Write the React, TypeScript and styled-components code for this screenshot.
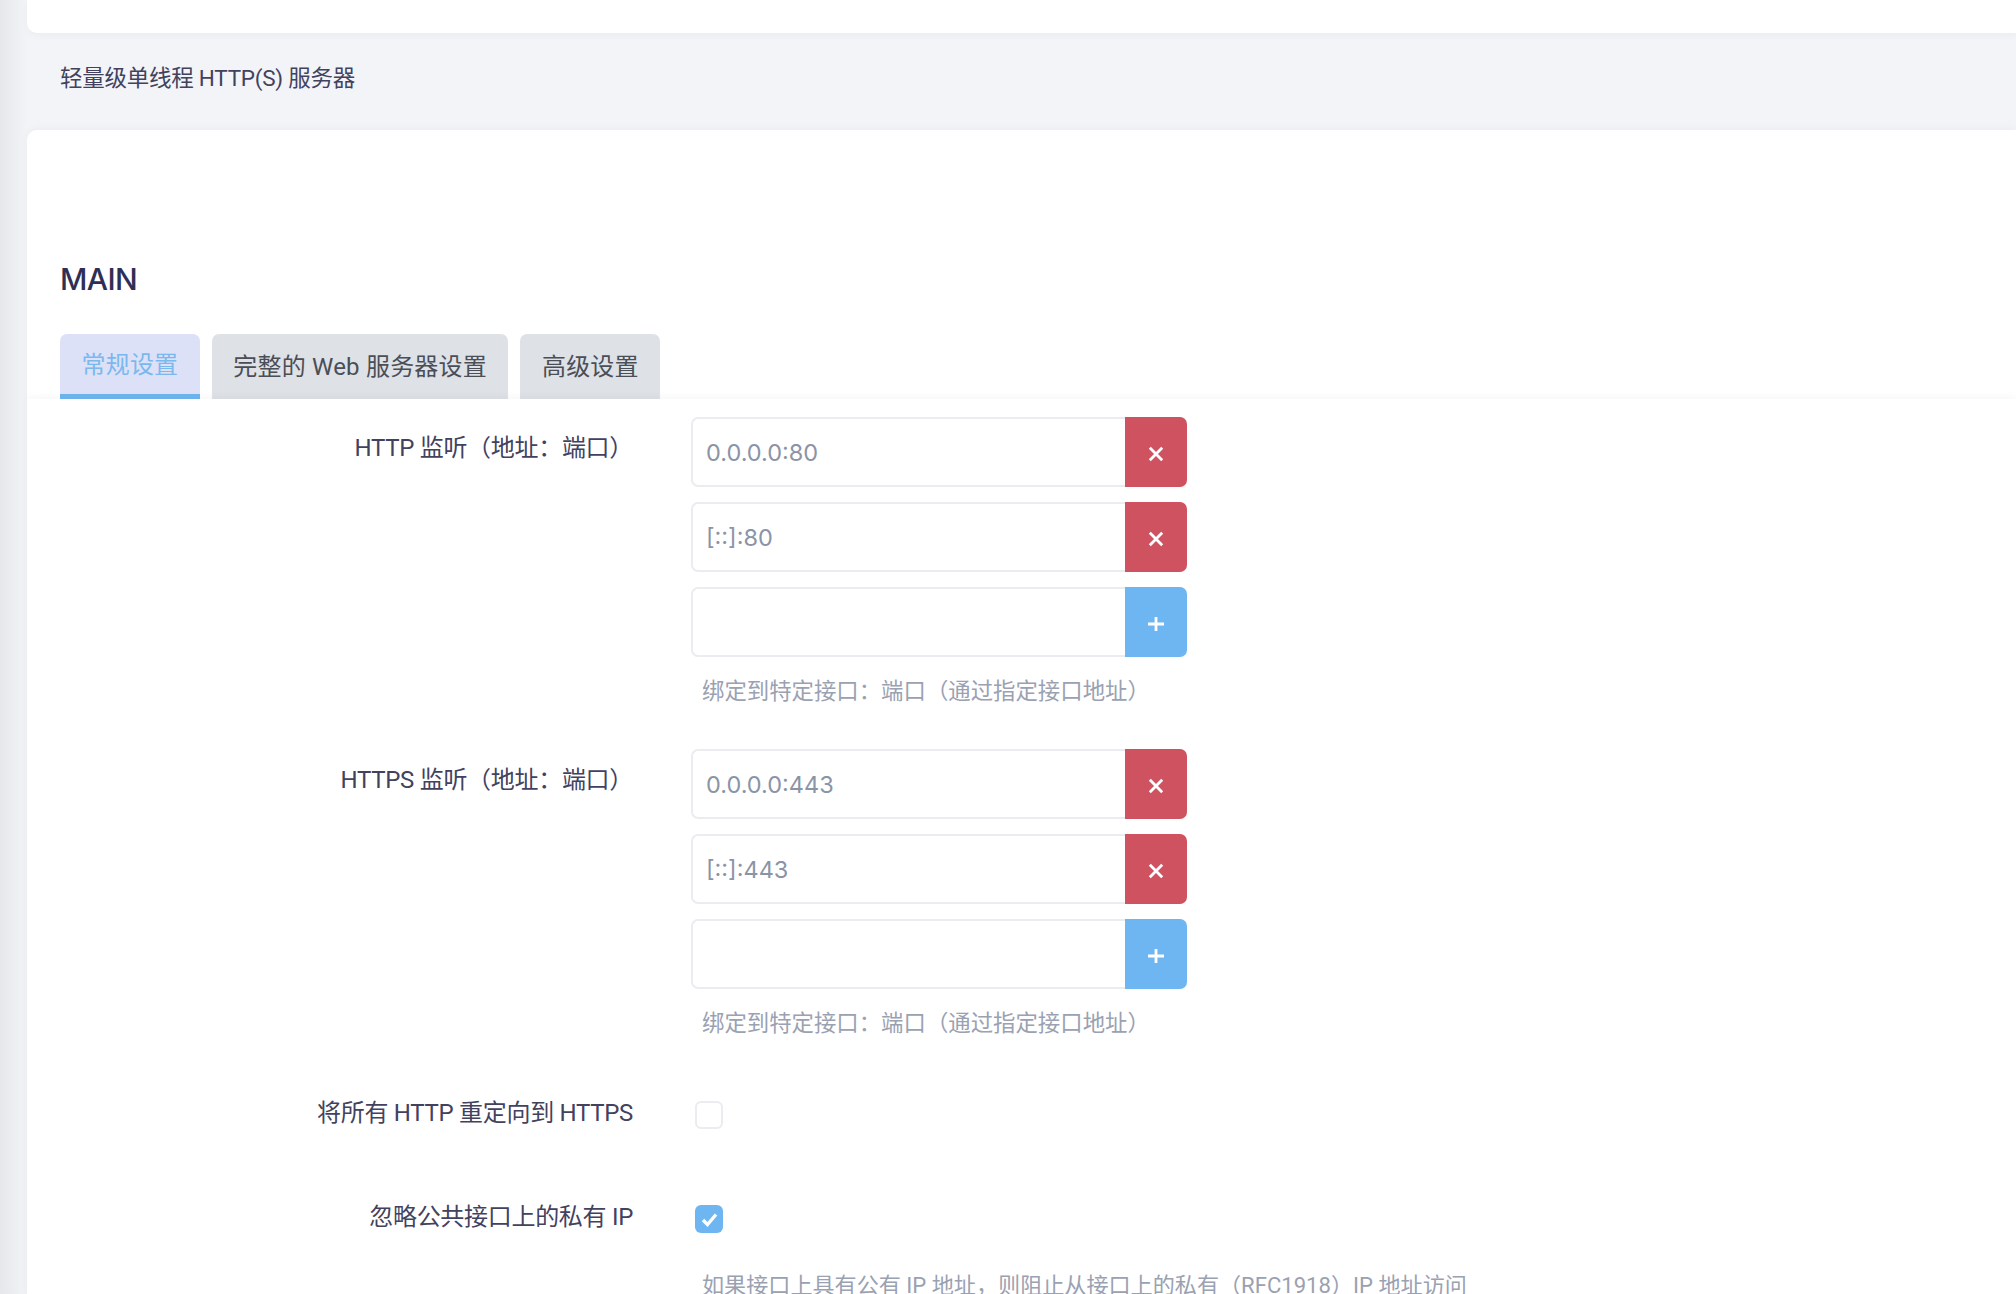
import styled, { createGlobalStyle } from "styled-components";

const GlobalStyle = createGlobalStyle`
  html, body {
    margin: 0;
    padding: 0;
    background: #f3f4f7;
  }
  * {
    box-sizing: border-box;
  }
`;

const fontStack = `Roboto, "Noto Sans CJK SC", sans-serif`;
const valueFont = `Inter, "Noto Sans CJK SC", sans-serif`;

const RemoveIcon = () => (
  <svg width="16" height="16" viewBox="0 0 16 16">
    <path d="M1.8 1.8 L14.2 14.2 M14.2 1.8 L1.8 14.2" stroke="#fff" strokeWidth="2.8" fill="none" />
  </svg>
);

const AddIcon = () => (
  <svg width="16" height="16" viewBox="0 0 16 16">
    <path d="M8 1 V15 M0 8 H16" stroke="#fff" strokeWidth="2.8" fill="none" />
  </svg>
);

const CheckIcon = () => (
  <svg width="19" height="19" viewBox="0 0 19 19">
    <path d="M3 10 L7.5 14.5 L16 4.5" stroke="#fff" strokeWidth="3.4" fill="none" />
  </svg>
);

const DynamicList = ({ values }: { values: string[] }) => (
  <ListWrap>
    {values.map((value) => (
      <InputGroup key={value}>
        <InputBox>{value}</InputBox>
        <ActionButton $kind="remove">
          <RemoveIcon />
        </ActionButton>
      </InputGroup>
    ))}
    <InputGroup>
      <InputBox />
      <ActionButton $kind="add">
        <AddIcon />
      </ActionButton>
    </InputGroup>
  </ListWrap>
);

const App = () => {
  return (
    <>
      <GlobalStyle />
      <Page>
        <TopCard />
        <Subtitle>轻量级单线程 HTTP(S) 服务器</Subtitle>
        <MainCard>
          <Title>MAIN</Title>
          <Tabs>
            <Tab $active>常规设置</Tab>
            <Tab>完整的 Web 服务器设置</Tab>
            <Tab>高级设置</Tab>
          </Tabs>
          <Panel>
            <ListRow>
              <Label>HTTP 监听（地址：端口）</Label>
              <Control>
                <DynamicList values={["0.0.0.0:80", "[::]:80"]} />
                <Hint>绑定到特定接口：端口（通过指定接口地址）</Hint>
              </Control>
            </ListRow>
            <ListRow>
              <Label>HTTPS 监听（地址：端口）</Label>
              <Control>
                <DynamicList values={["0.0.0.0:443", "[::]:443"]} />
                <Hint>绑定到特定接口：端口（通过指定接口地址）</Hint>
              </Control>
            </ListRow>
            <CheckRow>
              <Label $check>将所有 HTTP 重定向到 HTTPS</Label>
              <Control>
                <CheckBox />
              </Control>
            </CheckRow>
            <CheckRow>
              <Label $check>忽略公共接口上的私有 IP</Label>
              <Control>
                <CheckBox $checked>
                  <CheckIcon />
                </CheckBox>
                <CheckHint>如果接口上具有公有 IP 地址，则阻止从接口上的私有（RFC1918）IP 地址访问</CheckHint>
              </Control>
            </CheckRow>
          </Panel>
        </MainCard>
      </Page>
    </>
  );
};

const Page = styled.div`
  width: 2016px;
  height: 1294px;
  overflow: hidden;
  padding-left: 27px;
  background: linear-gradient(90deg, #e6e7eb 0, #f3f4f7 27px);
  font-family: ${fontStack};
  color: #3e3e5c;
`;
const TopCard = styled.div`
  height: 33px;
  background: #fff;
  border-bottom-left-radius: 10px;
  box-shadow: 0 3px 10px rgba(40, 40, 70, 0.03);
`;
const Subtitle = styled.div`
  height: 97px;
  padding: 27px 0 0 33px;
  font-size: 22.5px;
  line-height: 36px;
  letter-spacing: -0.25px;
  color: #42425f;
`;
const MainCard = styled.section`
  background: #fff;
  border-top-left-radius: 10px;
  padding-top: 129px;
  height: 1164px;
  box-shadow: 0 -2px 8px rgba(40, 40, 70, 0.03);
`;
const Title = styled.h2`
  margin: 0 0 35px 33px;
  font-family: ${valueFont};
  font-size: 30px;
  line-height: 40px;
  font-weight: 500;
  letter-spacing: -0.6px;
  color: #2f2f55;
`;
const Tabs = styled.div`
  display: flex;
  gap: 12px;
  padding-left: 33px;
  height: 65px;
`;
const Tab = styled.div<{ $active?: boolean }>`
  display: flex;
  align-items: center;
  justify-content: center;
  padding: 0 21.5px 4px;
  height: 65px;
  font-size: 24px;
  letter-spacing: 0.2px;
  border-radius: 7px 7px 0 0;
  background: ${(p) => (p.$active ? "#dde1f8" : "#dee1e5")};
  color: ${(p) => (p.$active ? "#7ab8ee" : "#4a4e57")};
  border-bottom: ${(p) => (p.$active ? "5px solid #6eb6f0" : "none")};
`;
const Panel = styled.div`
  position: relative;
  background: #fff;
  padding-top: 18px;
  box-shadow: 0 -3px 8px rgba(40, 40, 70, 0.03);
`;
const ListRow = styled.div`
  display: grid;
  grid-template-columns: 606px 496px;
  column-gap: 58px;
  margin-bottom: 40px;
`;
const CheckRow = styled.div`
  display: grid;
  grid-template-columns: 606px 796px;
  column-gap: 58px;
  margin-bottom: 76px;
  &:nth-child(3) {
    margin-top: 60px;
  }
`;
const Label = styled.div<{ $check?: boolean }>`
  text-align: right;
  font-size: 24px;
  letter-spacing: -0.3px;
  line-height: ${(p) => (p.$check ? "24px" : "36px")};
  padding-top: ${(p) => (p.$check ? "0" : "13px")};
  color: #42425f;
  white-space: nowrap;
`;
const Control = styled.div`
  display: flex;
  flex-direction: column;
  align-items: flex-start;
`;
const ListWrap = styled.div`
  display: flex;
  flex-direction: column;
  gap: 15px;
  width: 100%;
`;
const InputGroup = styled.div`
  display: flex;
  height: 70px;
`;
const InputBox = styled.div`
  flex: 1;
  padding: 0 13px;
  display: flex;
  align-items: center;
  border: 2px solid #eaecef;
  border-right: none;
  border-radius: 7px 0 0 7px;
  font-family: ${valueFont};
  font-size: 23.5px;
  color: #8b94a6;
  background: #fff;
`;
const ActionButton = styled.div<{ $kind: "add" | "remove" }>`
  width: 62px;
  display: flex;
  align-items: center;
  justify-content: center;
  padding-top: 3px;
  border-radius: 0 7px 7px 0;
  background: ${(p) => (p.$kind === "add" ? "#6eb6f2" : "#cf5260")};
`;
const Hint = styled.div`
  margin-top: 16px;
  padding-left: 11px;
  font-size: 22.4px;
  line-height: 36px;
  color: #9aa1b1;
  white-space: nowrap;
`;
const CheckHint = styled(Hint)`
  margin-top: 34px;
  font-size: 22.1px;
`;
const CheckBox = styled.div<{ $checked?: boolean }>`
  width: 28px;
  height: 28px;
  margin-left: 4px;
  border-radius: 6px;
  display: flex;
  align-items: center;
  justify-content: center;
  background: ${(p) => (p.$checked ? "#6eb6f2" : "#fff")};
  border: ${(p) => (p.$checked ? "none" : "2px solid #eaecef")};
`;

export default App;
